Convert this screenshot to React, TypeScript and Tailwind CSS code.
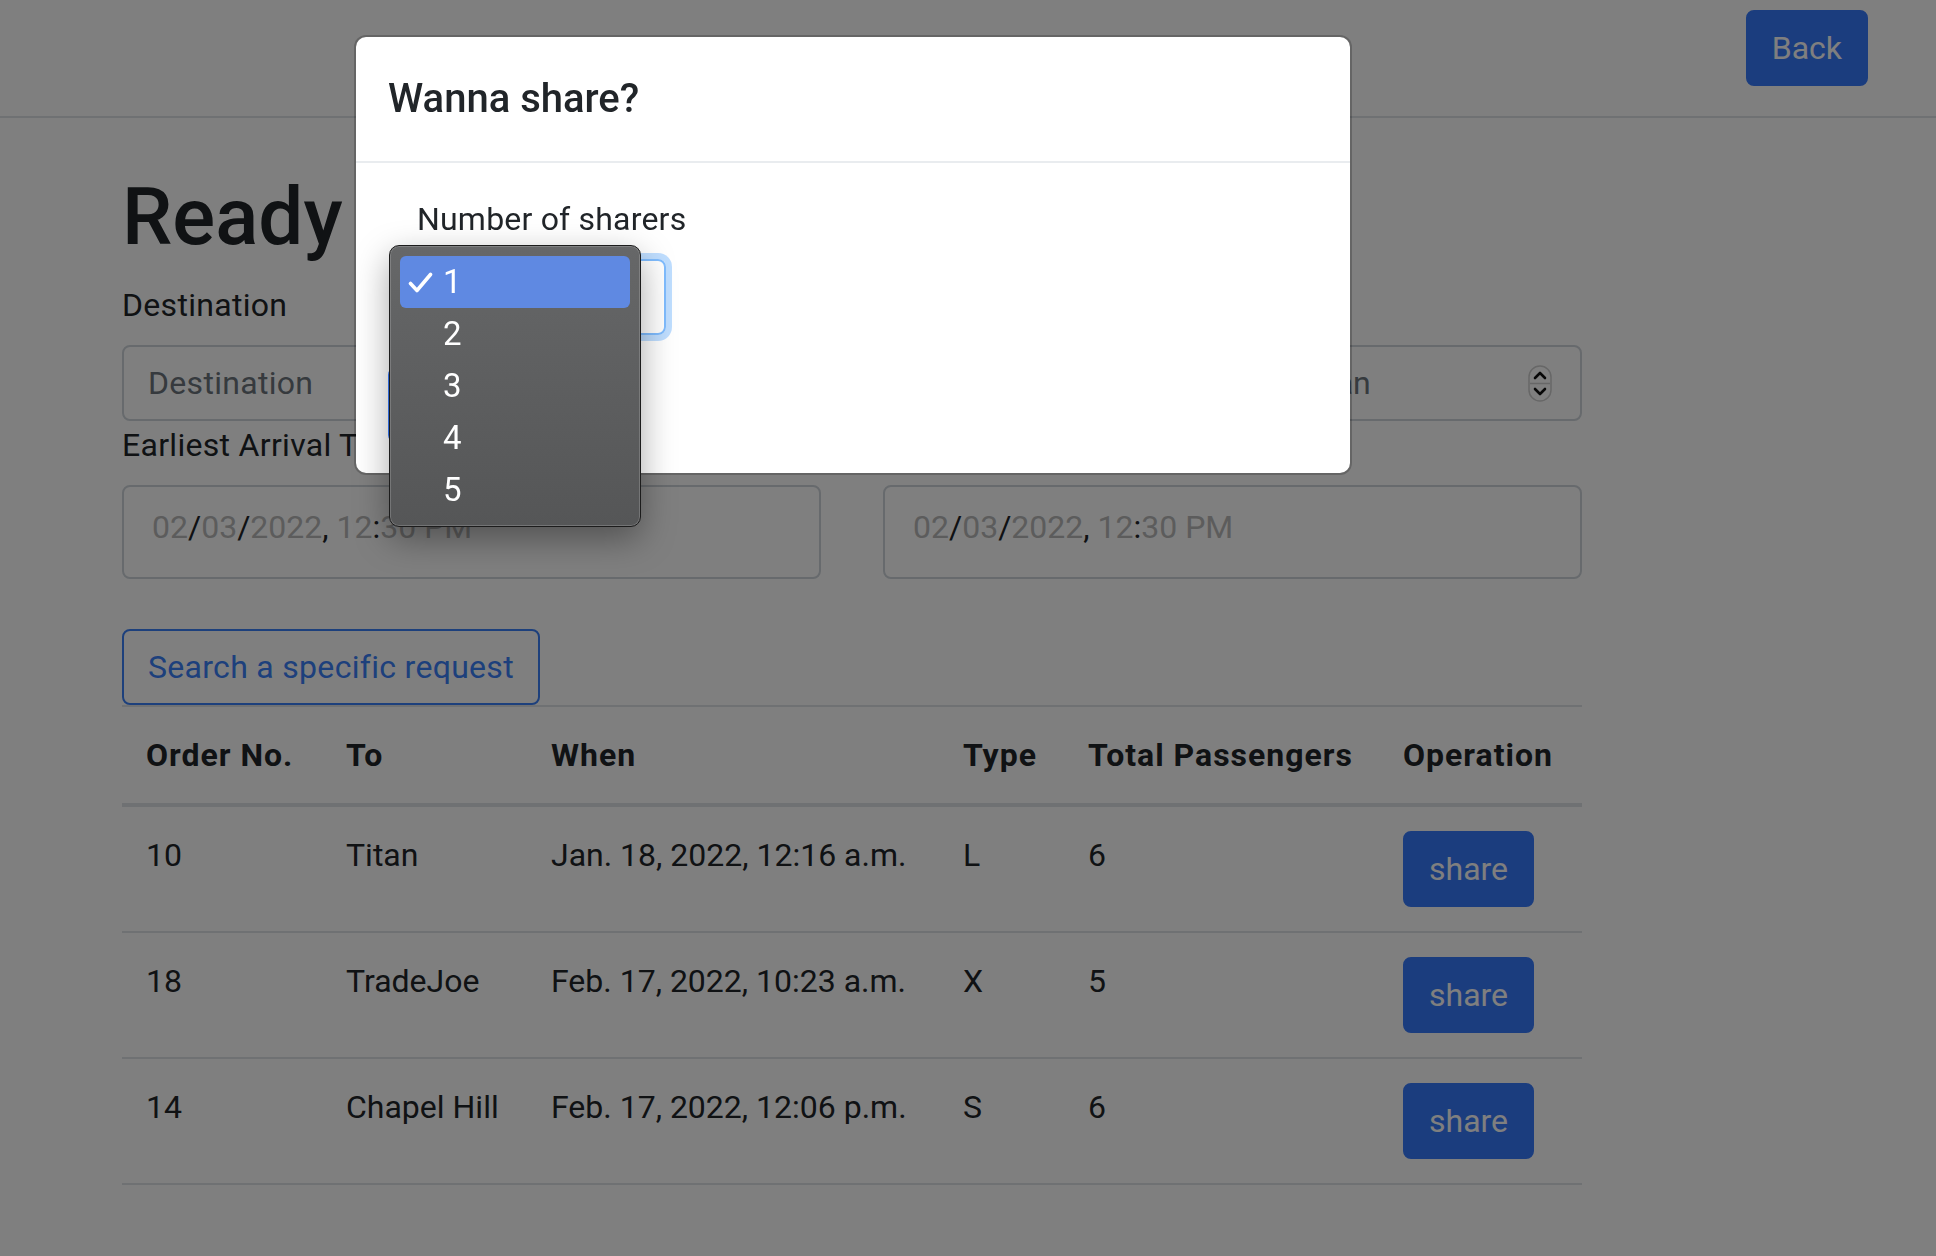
import React from "react";

const rows = [
  { no: "10", to: "Titan", when: "Jan. 18, 2022, 12:16 a.m.", type: "L", total: "6" },
  { no: "18", to: "TradeJoe", when: "Feb. 17, 2022, 10:23 a.m.", type: "X", total: "5" },
  { no: "14", to: "Chapel Hill", when: "Feb. 17, 2022, 12:06 p.m.", type: "S", total: "6" },
];

const DateBox = () => {
  return (
    <div className="h-[94px] rounded-[8px] border-2 border-[#ced4da] pb-[26px] pl-[28px] pt-[16px] text-[#b9b9b9]">
      02<span className="text-[#212529]">/</span>03<span className="text-[#212529]">/</span>2022
      <span className="text-[#212529]">,</span> 12<span className="text-[#212529]">:</span>30 PM
    </div>
  );
};

const Spinner = () => {
  return (
    <svg width="24" height="37" viewBox="0 0 24 37" fill="none">
      <rect x="1" y="1" width="22" height="35" rx="11" stroke="#cfcfcf" strokeWidth="1.5" />
      <line x1="2" y1="18.5" x2="22" y2="18.5" stroke="#cfcfcf" strokeWidth="1.5" />
      <polyline points="7,13 12,8 17,13" stroke="#111" strokeWidth="2.6" strokeLinecap="round" strokeLinejoin="round" />
      <polyline points="7,24 12,29 17,24" stroke="#111" strokeWidth="2.6" strokeLinecap="round" strokeLinejoin="round" />
    </svg>
  );
};

export default function App() {
  return (
    <div className="relative min-h-screen bg-white font-['Roboto',sans-serif] text-[32px] leading-[48px] text-[#212529]">
      <nav className="flex h-[118px] items-start justify-end border-b-2 border-[#dee2e6] pr-[68px] pt-[10px]">
        <button className="h-[76px] rounded-[8px] border-2 border-[#367afc] bg-[#367afc] px-[24px] text-white">
          Back
        </button>
      </nav>

      <main className="ml-[122px] w-[1460px] pt-[51px]">
        <h1 className="mb-[16px] text-[80px] font-medium leading-[96px]">Ready to share?</h1>
        <div className="grid grid-cols-2 gap-x-[62px]">
          <div>
            <label className="mb-[16px] block tracking-[0.3px]">Destination</label>
            <input
              placeholder="Destination"
              className="block h-[76px] w-full rounded-[8px] border-2 border-[#ced4da] px-[24px] tracking-[0.3px] outline-none placeholder:text-[#6c757d]"
            />
          </div>
          <div>
            <label className="mb-[16px] block">Max Passengers</label>
            <div className="flex h-[76px] items-center rounded-[8px] border-2 border-[#ced4da] pl-[24px] pr-[28px]">
              <span className="flex-1 whitespace-nowrap text-[#6c757d]">Number of passengers less than</span>
              <Spinner />
            </div>
          </div>
          <div>
            <label className="mb-[16px] block tracking-[0.3px]">Earliest Arrival Time</label>
            <DateBox />
          </div>
          <div>
            <label className="mb-[16px] block">Latest Arrival Time</label>
            <DateBox />
          </div>
        </div>

        <div className="mt-[50px] flex">
          <button className="h-[76px] rounded-[8px] border-2 border-[#3a80f8] px-[24px] tracking-[0.3px] text-[#3a80f8]">
            Search a specific request
          </button>
        </div>

        <table className="w-full table-fixed border-separate border-spacing-0 text-left">
          <colgroup>
            <col className="w-[200px]" />
            <col className="w-[205px]" />
            <col className="w-[412px]" />
            <col className="w-[125px]" />
            <col className="w-[315px]" />
            <col className="w-[203px]" />
          </colgroup>
          <thead>
            <tr>
              {["Order No.", "To", "When", "Type", "Total Passengers", "Operation"].map((h) => (
                <th
                  key={h}
                  className="whitespace-nowrap border-b-4 border-t-2 border-[#dee2e6] p-[24px] align-bottom font-bold tracking-[1px]"
                >
                  {h}
                </th>
              ))}
            </tr>
          </thead>
          <tbody>
            {rows.map((r) => (
              <tr key={r.no}>
                <td className="whitespace-nowrap border-b-2 border-[#dee2e6] p-[24px] align-top">{r.no}</td>
                <td className="whitespace-nowrap border-b-2 border-[#dee2e6] p-[24px] align-top">{r.to}</td>
                <td className="whitespace-nowrap border-b-2 border-[#dee2e6] p-[24px] align-top">{r.when}</td>
                <td className="whitespace-nowrap border-b-2 border-[#dee2e6] p-[24px] align-top">{r.type}</td>
                <td className="whitespace-nowrap border-b-2 border-[#dee2e6] p-[24px] align-top">{r.total}</td>
                <td className="border-b-2 border-[#dee2e6] p-[24px] align-top">
                  <button className="block h-[76px] rounded-[8px] border-2 border-[#367afc] bg-[#367afc] px-[24px] text-white">
                    share
                  </button>
                </td>
              </tr>
            ))}
          </tbody>
        </table>
      </main>

      <div className="fixed inset-0 bg-black/50" />

      <div className="absolute left-[354px] top-[35px] w-[998px] rounded-[12px] border-2 border-black/20 bg-white bg-clip-padding">
        <div className="border-b-2 border-[#e9ecef] p-[32px]">
          <h5 className="text-[40px] font-medium leading-[60px]">Wanna share?</h5>
        </div>
        <div className="px-[32px] pb-[30px] pt-[32px]">
          <div className="pl-[29px]">
            <label className="mb-[16px] block tracking-[0.2px]">Number of sharers</label>
            <div className="flex h-[76px] w-[249px] items-center rounded-[8px] border-2 border-[#80bdff] px-[24px] shadow-[0_0_0_6px_rgba(0,123,255,0.25)]">
              1
            </div>
          </div>
          <div className="mt-[32px] flex">
            <button className="h-[76px] rounded-[8px] border-2 border-[#367afc] bg-[#367afc] px-[24px] text-white">
              Submit
            </button>
          </div>
        </div>
      </div>

      <div className="absolute left-[389px] top-[245px] w-[252px] rounded-[10px] border border-[#1c1c1c] bg-gradient-to-b from-[#666768] to-[#555657] px-[10px] pb-[10px] pt-[10px] text-[33px] text-white shadow-[0_12px_34px_rgba(0,0,0,0.35),inset_0_0_0_1px_rgba(255,255,255,0.18)]">
        {["1", "2", "3", "4", "5"].map((n, i) => (
          <div
            key={n}
            className={
              i === 0
                ? "flex h-[52px] items-center rounded-[6px] bg-[#5f89e2] pl-[8px]"
                : "flex h-[52px] items-center rounded-[6px] pl-[8px]"
            }
          >
            <span className="flex w-[35px] items-center">
              {i === 0 && (
                <svg width="25" height="21" viewBox="0 0 25 21" fill="none">
                  <polyline
                    points="2.5,11.5 9,18.5 22.5,2.5"
                    stroke="white"
                    strokeWidth="3.6"
                    strokeLinecap="round"
                    strokeLinejoin="round"
                  />
                </svg>
              )}
            </span>
            <span className="leading-[52px]">{n}</span>
          </div>
        ))}
      </div>
    </div>
  );
}
